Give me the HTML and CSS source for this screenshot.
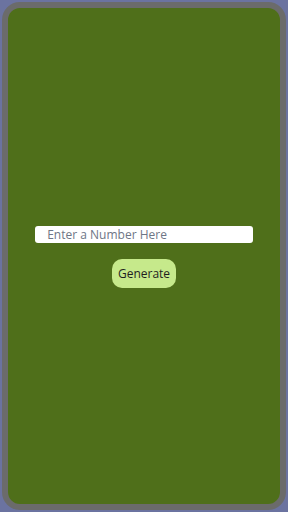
FILE: index.html
```html
<!DOCTYPE html>
<html lang="en">
<head>
    <meta charset="UTF-8">
    <meta name="viewport" content="width=device-width, initial-scale=1.0">
    <title>Number Generator</title>
    <link rel="stylesheet" href="styles.css">
</head>
<body>
    <div class="phone">
        <div class="screen">
            <input class="number-input" type="text" placeholder="Enter a Number Here">
            <button class="generate-btn">Generate</button>
        </div>
    </div>
</body>
</html>
```

FILE: styles.css
```css
* {
    margin: 0;
    padding: 0;
    box-sizing: border-box;
}

html, body {
    height: 100%;
}

body {
    font-family: "Open Sans", "Noto Sans", sans-serif;
    background: #6b73a0;
    padding: 2px;
}

.phone {
    height: 100%;
    border: 6px solid #6b6b6b;
    border-radius: 18px;
    background: #4f6f1a;
    overflow: hidden;
}

.screen {
    height: 100%;
    display: flex;
    flex-direction: column;
    align-items: center;
    justify-content: center;
    gap: 16px;
    padding-top: 2px;
}

.number-input {
    width: 80%;
    height: 17px;
    border: none;
    border-radius: 3px;
    background: #fff;
    padding: 0 12px;
    font-family: inherit;
    font-size: 12px;
    color: #333;
    outline: none;
}

.number-input::placeholder {
    color: #6e7686;
}

.generate-btn {
    width: 64px;
    height: 29px;
    border: none;
    border-radius: 10px;
    background: #c6e98b;
    color: #1f1f1f;
    font-family: inherit;
    font-size: 12px;
    cursor: pointer;
}
```
